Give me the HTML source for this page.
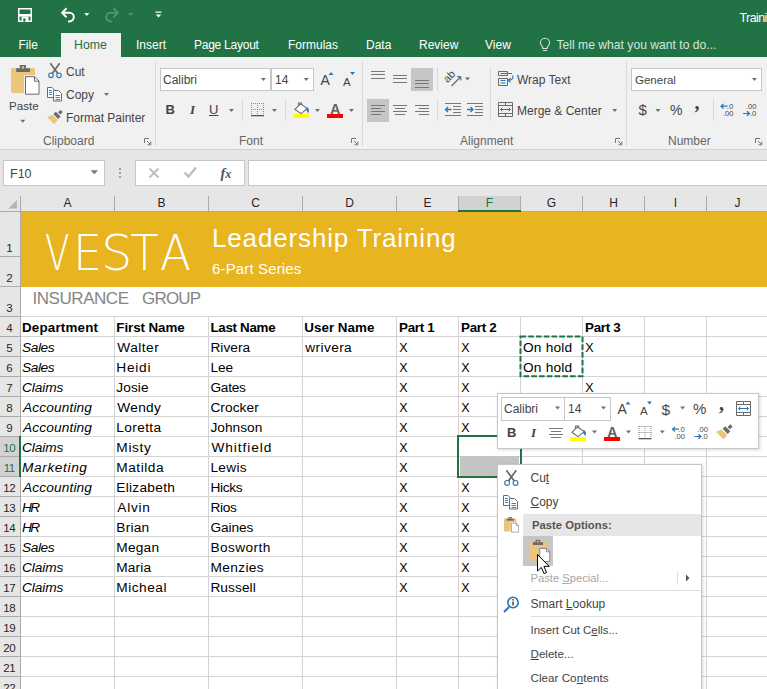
<!DOCTYPE html>
<html lang="en"><head><meta charset="utf-8"><title>Excel</title><style>
*{box-sizing:border-box;margin:0;padding:0}
html,body{width:767px;height:689px;overflow:hidden;background:#fff}
body{position:relative;font-family:"Liberation Sans",sans-serif;font-size:12px;color:#444444}
.a{position:absolute;white-space:pre}
.t{position:absolute;white-space:pre;line-height:16px;height:16px}
.ui{font-size:12px;color:#444444}
.tab{font-size:12px;color:#fff;top:37px}
.c{position:absolute;white-space:pre;font-size:13.7px;color:#000;line-height:20px;height:20px}
.cb{font-weight:bold;font-size:13.4px}
.ci{font-style:italic}
.rh{position:absolute;left:-1px;width:20.4px;text-align:center;letter-spacing:-0.4px;font-size:11.5px;color:#262626;line-height:14px}
.ch{position:absolute;top:196px;text-align:center;font-size:12px;color:#262626;line-height:15px;height:15px}
.box{position:absolute;background:#fff;border:1px solid #c6c6c6}
.sep{position:absolute;width:1px;background:#d9d9d9}
.sel{position:absolute;background:#c6c6c6}
.m{position:absolute;white-space:pre;font-size:12px;color:#444444;line-height:16px}
u{text-decoration:underline;text-underline-offset:1px}
</style></head><body>
<div class="a" style="left:0;top:0;width:767px;height:57px;background:#217346"></div>
<div class="a" style="left:61px;top:33px;width:60px;height:24px;background:#f1f1f1"></div>
<div class="t" style="left:739.5px;top:9.8px;color:#fff;font-size:12.4px;letter-spacing:-0.55px">Training</div>
<div class="t tab" style="left:18.5px">File</div>
<div class="t tab" style="left:136px">Insert</div>
<div class="t tab" style="left:194px;letter-spacing:-0.25px">Page Layout</div>
<div class="t tab" style="left:288px">Formulas</div>
<div class="t tab" style="left:366px">Data</div>
<div class="t tab" style="left:419px">Review</div>
<div class="t tab" style="left:485px">View</div>
<div class="t tab" style="left:74px;color:#217346;font-size:12.3px">Home</div>
<div class="t tab" style="left:556.5px;color:#d5e6dc;font-size:12.15px">Tell me what you want to do...</div>
<div class="a" style="left:0;top:57px;width:767px;height:92px;background:#f1f1f1"></div>
<div class="a" style="left:0;top:149px;width:767px;height:62px;background:#e6e6e6"></div>
<div class="a" style="left:0;top:149px;width:767px;height:1px;background:#d2d2d2"></div>
<div class="sep" style="left:155px;top:62px;height:84px"></div>
<div class="sep" style="left:362px;top:62px;height:84px"></div>
<div class="sep" style="left:626px;top:62px;height:84px"></div>
<div class="sep" style="left:242px;top:99px;height:22px"></div>
<div class="sep" style="left:285px;top:99px;height:22px"></div>
<div class="sep" style="left:437px;top:68px;height:23px"></div>
<div class="sep" style="left:437px;top:99px;height:22px"></div>
<div class="sep" style="left:490px;top:68px;height:53px"></div>
<div class="sep" style="left:713px;top:99px;height:22px"></div>
<div class="sel" style="left:411px;top:68px;width:22px;height:23px"></div>
<div class="sel" style="left:367px;top:99px;width:22px;height:23px"></div>
<div class="box" style="left:160px;top:68px;width:111px;height:23px"></div>
<div class="box" style="left:271px;top:68px;width:43px;height:23px"></div>
<div class="box" style="left:631px;top:68px;width:131px;height:23px"></div>
<div class="t ui" style="left:9px;top:98px;font-size:11.6px">Paste</div>
<div class="t ui" style="left:66px;top:64px;">Cut</div>
<div class="t ui" style="left:66px;top:87px;">Copy</div>
<div class="t ui" style="left:66px;top:110px;">Format Painter</div>
<div class="t ui" style="left:43px;top:133px;color:#666">Clipboard</div>
<div class="t ui" style="left:163px;top:72px;">Calibri</div>
<div class="t ui" style="left:275px;top:72px;">14</div>
<div class="t ui" style="left:239px;top:133px;color:#666">Font</div>
<div class="t ui" style="left:517px;top:72px;">Wrap Text</div>
<div class="t ui" style="left:517px;top:103px;">Merge &amp; Center</div>
<div class="t ui" style="left:460px;top:133px;color:#666">Alignment</div>
<div class="t ui" style="left:635px;top:72px;font-size:11.5px">General</div>
<div class="t ui" style="left:668px;top:133px;color:#666">Number</div>
<div class="t ui" style="left:165.5px;top:102px;font-weight:bold;font-size:13px">B</div>
<div class="t ui" style="left:190px;top:102px;font-style:italic;font-weight:bold;font-size:13px;font-family:'Liberation Serif',serif">I</div>
<div class="t ui" style="left:209px;top:102px;font-size:13px;text-decoration:underline">U</div>
<div class="t ui" style="left:638.5px;top:101.5px;font-size:15px">$</div>
<div class="t ui" style="left:670px;top:102px;font-size:14px">%</div>
<div class="t ui" style="left:694.5px;top:93.5px;font-size:20px;font-weight:bold;font-family:'Liberation Serif',serif">,</div>
<div class="t ui" style="left:320.5px;top:72px;font-size:14px">A</div>
<div class="t ui" style="left:343px;top:73.5px;font-size:11.5px">A</div>
<div class="t ui" style="left:330.3px;top:101.2px;font-size:14px;font-weight:bold;color:#606060">A</div>
<div class="box" style="left:3px;top:160px;width:102px;height:26px;border-color:#c6c6c6"></div>
<div class="box" style="left:135px;top:160px;width:110px;height:26px;border-color:#c6c6c6"></div>
<div class="box" style="left:248px;top:160px;width:530px;height:26px;border-color:#c6c6c6"></div>
<div class="t ui" style="left:10px;top:165.5px;font-size:12.5px">F10</div>
<div class="t" style="left:220.5px;top:164.5px;font-family:'Liberation Serif',serif;font-style:italic;font-weight:bold;font-size:14px;color:#555"><span style="font-size:14.5px">f</span><span style="font-size:12px;letter-spacing:0">x</span></div>
<div class="a" style="left:21px;top:211px;width:746px;height:478px;background:#fff"></div>
<div class="a" style="left:0;top:211px;width:21px;height:478px;background:#e6e6e6"></div>
<div class="a" style="left:459px;top:196px;width:62px;height:15px;background:#d2d2d2"></div>
<div class="a" style="left:0;top:211px;width:458px;height:1px;background:#ababab"></div>
<div class="a" style="left:521px;top:211px;width:246px;height:1px;background:#ababab"></div>
<div class="a" style="left:114px;top:196px;width:1px;height:16px;background:#ababab"></div>
<div class="ch" style="left:21px;width:93px;color:#262626">A</div>
<div class="a" style="left:208px;top:196px;width:1px;height:16px;background:#ababab"></div>
<div class="ch" style="left:115px;width:93px;color:#262626">B</div>
<div class="a" style="left:302px;top:196px;width:1px;height:16px;background:#ababab"></div>
<div class="ch" style="left:209px;width:93px;color:#262626">C</div>
<div class="a" style="left:396px;top:196px;width:1px;height:16px;background:#ababab"></div>
<div class="ch" style="left:303px;width:93px;color:#262626">D</div>
<div class="a" style="left:458px;top:196px;width:1px;height:16px;background:#ababab"></div>
<div class="ch" style="left:397px;width:61px;color:#262626">E</div>
<div class="a" style="left:520px;top:196px;width:1px;height:16px;background:#ababab"></div>
<div class="ch" style="left:459px;width:61px;color:#217346">F</div>
<div class="a" style="left:582px;top:196px;width:1px;height:16px;background:#ababab"></div>
<div class="ch" style="left:521px;width:61px;color:#262626">G</div>
<div class="a" style="left:644px;top:196px;width:1px;height:16px;background:#ababab"></div>
<div class="ch" style="left:583px;width:61px;color:#262626">H</div>
<div class="a" style="left:706px;top:196px;width:1px;height:16px;background:#ababab"></div>
<div class="ch" style="left:645px;width:61px;color:#262626">I</div>
<div class="a" style="left:768px;top:196px;width:1px;height:16px;background:#ababab"></div>
<div class="ch" style="left:707px;width:61px;color:#262626">J</div>
<div class="a" style="left:20px;top:196px;width:1px;height:16px;background:#ababab"></div>
<div class="a" style="left:458px;top:210px;width:63px;height:2px;background:#217346"></div>
<div class="a" style="left:21px;top:316px;width:746px;height:1px;background:#d4d4d4"></div>
<div class="a" style="left:21px;top:336px;width:746px;height:1px;background:#d4d4d4"></div>
<div class="a" style="left:21px;top:356px;width:746px;height:1px;background:#d4d4d4"></div>
<div class="a" style="left:21px;top:376px;width:746px;height:1px;background:#d4d4d4"></div>
<div class="a" style="left:21px;top:396px;width:746px;height:1px;background:#d4d4d4"></div>
<div class="a" style="left:21px;top:416px;width:746px;height:1px;background:#d4d4d4"></div>
<div class="a" style="left:21px;top:436px;width:746px;height:1px;background:#d4d4d4"></div>
<div class="a" style="left:21px;top:456px;width:746px;height:1px;background:#d4d4d4"></div>
<div class="a" style="left:21px;top:476px;width:746px;height:1px;background:#d4d4d4"></div>
<div class="a" style="left:21px;top:496px;width:746px;height:1px;background:#d4d4d4"></div>
<div class="a" style="left:21px;top:516px;width:746px;height:1px;background:#d4d4d4"></div>
<div class="a" style="left:21px;top:536px;width:746px;height:1px;background:#d4d4d4"></div>
<div class="a" style="left:21px;top:556px;width:746px;height:1px;background:#d4d4d4"></div>
<div class="a" style="left:21px;top:576px;width:746px;height:1px;background:#d4d4d4"></div>
<div class="a" style="left:21px;top:596px;width:746px;height:1px;background:#d4d4d4"></div>
<div class="a" style="left:21px;top:616px;width:746px;height:1px;background:#d4d4d4"></div>
<div class="a" style="left:21px;top:636px;width:746px;height:1px;background:#d4d4d4"></div>
<div class="a" style="left:21px;top:656px;width:746px;height:1px;background:#d4d4d4"></div>
<div class="a" style="left:21px;top:676px;width:746px;height:1px;background:#d4d4d4"></div>
<div class="a" style="left:21px;top:696px;width:746px;height:1px;background:#d4d4d4"></div>
<div class="a" style="left:114px;top:316px;width:1px;height:373px;background:#d4d4d4"></div>
<div class="a" style="left:208px;top:316px;width:1px;height:373px;background:#d4d4d4"></div>
<div class="a" style="left:302px;top:316px;width:1px;height:373px;background:#d4d4d4"></div>
<div class="a" style="left:396px;top:316px;width:1px;height:373px;background:#d4d4d4"></div>
<div class="a" style="left:458px;top:316px;width:1px;height:373px;background:#d4d4d4"></div>
<div class="a" style="left:520px;top:316px;width:1px;height:373px;background:#d4d4d4"></div>
<div class="a" style="left:582px;top:316px;width:1px;height:373px;background:#d4d4d4"></div>
<div class="a" style="left:644px;top:316px;width:1px;height:373px;background:#d4d4d4"></div>
<div class="a" style="left:706px;top:316px;width:1px;height:373px;background:#d4d4d4"></div>
<div class="a" style="left:768px;top:316px;width:1px;height:373px;background:#d4d4d4"></div>
<div class="a" style="left:21px;top:212px;width:746px;height:75px;background:#e8b420"></div>
<div class="a" style="left:0;top:437px;width:20px;height:40px;background:#d2d2d2"></div>
<div class="a" style="left:20px;top:211px;width:1px;height:478px;background:#ababab"></div>
<div class="a" style="left:0;top:256px;width:20px;height:1px;background:#ababab"></div>
<div class="rh" style="top:241px;color:#262626">1</div>
<div class="a" style="left:0;top:286px;width:20px;height:1px;background:#ababab"></div>
<div class="rh" style="top:271px;color:#262626">2</div>
<div class="a" style="left:0;top:316px;width:20px;height:1px;background:#ababab"></div>
<div class="rh" style="top:301px;color:#262626">3</div>
<div class="a" style="left:0;top:336px;width:20px;height:1px;background:#ababab"></div>
<div class="rh" style="top:321px;color:#262626">4</div>
<div class="a" style="left:0;top:356px;width:20px;height:1px;background:#ababab"></div>
<div class="rh" style="top:341px;color:#262626">5</div>
<div class="a" style="left:0;top:376px;width:20px;height:1px;background:#ababab"></div>
<div class="rh" style="top:361px;color:#262626">6</div>
<div class="a" style="left:0;top:396px;width:20px;height:1px;background:#ababab"></div>
<div class="rh" style="top:381px;color:#262626">7</div>
<div class="a" style="left:0;top:416px;width:20px;height:1px;background:#ababab"></div>
<div class="rh" style="top:401px;color:#262626">8</div>
<div class="a" style="left:0;top:436px;width:20px;height:1px;background:#ababab"></div>
<div class="rh" style="top:421px;color:#262626">9</div>
<div class="a" style="left:0;top:456px;width:20px;height:1px;background:#ababab"></div>
<div class="rh" style="top:441px;color:#217346">10</div>
<div class="a" style="left:0;top:476px;width:20px;height:1px;background:#ababab"></div>
<div class="rh" style="top:461px;color:#217346">11</div>
<div class="a" style="left:0;top:496px;width:20px;height:1px;background:#ababab"></div>
<div class="rh" style="top:481px;color:#262626">12</div>
<div class="a" style="left:0;top:516px;width:20px;height:1px;background:#ababab"></div>
<div class="rh" style="top:501px;color:#262626">13</div>
<div class="a" style="left:0;top:536px;width:20px;height:1px;background:#ababab"></div>
<div class="rh" style="top:521px;color:#262626">14</div>
<div class="a" style="left:0;top:556px;width:20px;height:1px;background:#ababab"></div>
<div class="rh" style="top:541px;color:#262626">15</div>
<div class="a" style="left:0;top:576px;width:20px;height:1px;background:#ababab"></div>
<div class="rh" style="top:561px;color:#262626">16</div>
<div class="a" style="left:0;top:596px;width:20px;height:1px;background:#ababab"></div>
<div class="rh" style="top:581px;color:#262626">17</div>
<div class="a" style="left:0;top:616px;width:20px;height:1px;background:#ababab"></div>
<div class="rh" style="top:601px;color:#262626">18</div>
<div class="a" style="left:0;top:636px;width:20px;height:1px;background:#ababab"></div>
<div class="rh" style="top:621px;color:#262626">19</div>
<div class="a" style="left:0;top:656px;width:20px;height:1px;background:#ababab"></div>
<div class="rh" style="top:641px;color:#262626">20</div>
<div class="a" style="left:0;top:676px;width:20px;height:1px;background:#ababab"></div>
<div class="rh" style="top:661px;color:#262626">21</div>
<div class="a" style="left:0;top:696px;width:20px;height:1px;background:#ababab"></div>
<div class="rh" style="top:681px;color:#262626">22</div>
<div class="a" style="left:19px;top:436px;width:2px;height:41px;background:#217346"></div>
<div class="a" id="vesta" style="left:0;top:223.5px;width:210px;height:58px;font-family:'DejaVu Sans Light','DejaVu Sans',sans-serif;font-weight:200;font-size:50.5px;line-height:58px;color:#fff"><span style="position:absolute;top:0;left:44.59px;transform-origin:0 0;transform:scaleX(0.709)">V</span><span style="position:absolute;top:0;left:72.55px;transform-origin:0 0;transform:scaleX(0.909)">E</span><span style="position:absolute;top:0;left:100.78px;transform-origin:0 0;transform:scaleX(0.979)">S</span><span style="position:absolute;top:0;left:129.87px;transform-origin:0 0;transform:scaleX(0.928)">T</span><span style="position:absolute;top:0;left:159.90px;transform-origin:0 0;transform:scaleX(0.897)">A</span></div>
<div class="a" style="left:32.5px;top:289.5px;font-size:17px;line-height:18px;color:#858585;letter-spacing:-0.45px" id="ins">INSURANCE</div>
<div class="a" style="left:142px;top:289.5px;font-size:17px;line-height:18px;color:#858585;letter-spacing:-0.8px" id="grp">GROUP</div>
<div class="a" style="left:212px;top:223px;font-size:26px;line-height:30px;color:#fff;letter-spacing:0.85px" id="lead">Leadership Training</div>
<div class="a" style="left:212px;top:260px;font-size:15px;line-height:18px;color:#fff;letter-spacing:0.15px" id="six">6-Part Series</div>
<div class="c cb" style="left:22px;top:318px;letter-spacing:0.17px">Department</div>
<div class="c cb" style="left:116.3px;top:318px;letter-spacing:-0.09px">First Name</div>
<div class="c cb" style="left:210.4px;top:318px;letter-spacing:-0.31px">Last Name</div>
<div class="c cb" style="left:304.3px;top:318px;letter-spacing:0.01px">User Name</div>
<div class="c cb" style="left:399px;top:318px;letter-spacing:-0.3px">Part 1</div>
<div class="c cb" style="left:461px;top:318px;letter-spacing:-0.3px">Part 2</div>
<div class="c cb" style="left:585px;top:318px;letter-spacing:-0.3px">Part 3</div>
<div class="c ci" style="left:22px;top:338px;letter-spacing:-0.40px">Sales</div>
<div class="c " style="left:117.3px;top:338px;letter-spacing:0.48px">Walter</div>
<div class="c " style="left:210.4px;top:338px;letter-spacing:0.04px">Rivera</div>
<div class="c " style="left:305.3px;top:338px;letter-spacing:0.38px">wrivera</div>
<div class="c " style="left:399.3px;top:338px;font-size:12.5px">X</div>
<div class="c " style="left:461.3px;top:338px;font-size:12.5px">X</div>
<div class="c " style="left:523px;top:338px;letter-spacing:0.2px">On hold</div>
<div class="c " style="left:585.3px;top:338px;font-size:12.5px">X</div>
<div class="c ci" style="left:22px;top:358px;letter-spacing:-0.40px">Sales</div>
<div class="c " style="left:116.3px;top:358px;letter-spacing:0.75px">Heidi</div>
<div class="c " style="left:210.4px;top:358px;letter-spacing:-0.10px">Lee</div>
<div class="c " style="left:399.3px;top:358px;font-size:12.5px">X</div>
<div class="c " style="left:461.3px;top:358px;font-size:12.5px">X</div>
<div class="c " style="left:523px;top:358px;letter-spacing:0.2px">On hold</div>
<div class="c ci" style="left:22px;top:378px;letter-spacing:-0.08px">Claims</div>
<div class="c " style="left:116.3px;top:378px;letter-spacing:0.07px">Josie</div>
<div class="c " style="left:210.4px;top:378px;letter-spacing:-0.25px">Gates</div>
<div class="c " style="left:399.3px;top:378px;font-size:12.5px">X</div>
<div class="c " style="left:461.3px;top:378px;font-size:12.5px">X</div>
<div class="c " style="left:585.3px;top:378px;font-size:12.5px">X</div>
<div class="c ci" style="left:23px;top:398px;letter-spacing:0.14px">Accounting</div>
<div class="c " style="left:117.3px;top:398px;letter-spacing:0.30px">Wendy</div>
<div class="c " style="left:210.4px;top:398px;letter-spacing:0.07px">Crocker</div>
<div class="c " style="left:399.3px;top:398px;font-size:12.5px">X</div>
<div class="c " style="left:461.3px;top:398px;font-size:12.5px">X</div>
<div class="c ci" style="left:23px;top:418px;letter-spacing:0.14px">Accounting</div>
<div class="c " style="left:116.3px;top:418px;letter-spacing:0.37px">Loretta</div>
<div class="c " style="left:210.4px;top:418px;letter-spacing:0.02px">Johnson</div>
<div class="c " style="left:399.3px;top:418px;font-size:12.5px">X</div>
<div class="c " style="left:461.3px;top:418px;font-size:12.5px">X</div>
<div class="c ci" style="left:22px;top:438px;letter-spacing:-0.08px">Claims</div>
<div class="c " style="left:116.3px;top:438px;letter-spacing:0.68px">Misty</div>
<div class="c " style="left:211.4px;top:438px;letter-spacing:0.94px">Whitfield</div>
<div class="c " style="left:399.3px;top:438px;font-size:12.5px">X</div>
<div class="c ci" style="left:22px;top:458px;letter-spacing:0.61px">Marketing</div>
<div class="c " style="left:116.3px;top:458px;letter-spacing:0.52px">Matilda</div>
<div class="c " style="left:210.4px;top:458px;letter-spacing:0.30px">Lewis</div>
<div class="c " style="left:399.3px;top:458px;font-size:12.5px">X</div>
<div class="c ci" style="left:23px;top:478px;letter-spacing:0.14px">Accounting</div>
<div class="c " style="left:116.3px;top:478px;letter-spacing:0.28px">Elizabeth</div>
<div class="c " style="left:210.4px;top:478px;letter-spacing:-0.30px">Hicks</div>
<div class="c " style="left:399.3px;top:478px;font-size:12.5px">X</div>
<div class="c " style="left:461.3px;top:478px;font-size:12.5px">X</div>
<div class="c ci" style="left:22px;top:498px;letter-spacing:-1.70px">HR</div>
<div class="c " style="left:117.3px;top:498px;letter-spacing:0.72px">Alvin</div>
<div class="c " style="left:210.4px;top:498px;letter-spacing:-0.27px">Rios</div>
<div class="c " style="left:399.3px;top:498px;font-size:12.5px">X</div>
<div class="c " style="left:461.3px;top:498px;font-size:12.5px">X</div>
<div class="c ci" style="left:22px;top:518px;letter-spacing:-1.70px">HR</div>
<div class="c " style="left:116.3px;top:518px;letter-spacing:0.22px">Brian</div>
<div class="c " style="left:210.4px;top:518px;letter-spacing:-0.08px">Gaines</div>
<div class="c " style="left:399.3px;top:518px;font-size:12.5px">X</div>
<div class="c " style="left:461.3px;top:518px;font-size:12.5px">X</div>
<div class="c ci" style="left:22px;top:538px;letter-spacing:-0.40px">Sales</div>
<div class="c " style="left:116.3px;top:538px;letter-spacing:0.22px">Megan</div>
<div class="c " style="left:210.4px;top:538px;letter-spacing:0.41px">Bosworth</div>
<div class="c " style="left:399.3px;top:538px;font-size:12.5px">X</div>
<div class="c " style="left:461.3px;top:538px;font-size:12.5px">X</div>
<div class="c ci" style="left:22px;top:558px;letter-spacing:-0.08px">Claims</div>
<div class="c " style="left:116.3px;top:558px;letter-spacing:0.13px">Maria</div>
<div class="c " style="left:210.4px;top:558px;letter-spacing:0.38px">Menzies</div>
<div class="c " style="left:399.3px;top:558px;font-size:12.5px">X</div>
<div class="c " style="left:461.3px;top:558px;font-size:12.5px">X</div>
<div class="c ci" style="left:22px;top:578px;letter-spacing:-0.08px">Claims</div>
<div class="c " style="left:116.3px;top:578px;letter-spacing:0.50px">Micheal</div>
<div class="c " style="left:210.4px;top:578px;letter-spacing:0.08px">Russell</div>
<div class="c " style="left:399.3px;top:578px;font-size:12.5px">X</div>
<div class="c " style="left:461.3px;top:578px;font-size:12.5px">X</div>
<div class="a" style="left:460px;top:456px;width:59px;height:20px;background:#c4c4c4"></div>
<div class="a" style="left:457px;top:435px;width:65px;height:43px;border:2px solid #217346"></div>
<svg class="a" style="left:518px;top:334px" width="68" height="46"><rect x="2.5" y="2.5" width="62" height="39.7" fill="none" stroke="#217346" stroke-width="2" stroke-dasharray="5.7 2.05"/></svg>
<div class="a" style="left:497px;top:393px;width:262px;height:56px;background:#fff;border:1px solid #c6c6c6;box-shadow:1px 1px 3px rgba(0,0,0,.16)"></div>
<div class="box" style="left:501px;top:397px;width:64px;height:24px;border-color:#c6c6c6"></div>
<div class="box" style="left:564px;top:397px;width:47px;height:24px;border-color:#c6c6c6"></div>
<div class="t ui" style="left:504px;top:401px;">Calibri</div>
<div class="t ui" style="left:568px;top:401px;">14</div>
<div class="t ui" style="left:617.5px;top:401px;font-size:14px">A</div>
<div class="t ui" style="left:640px;top:402.5px;font-size:11.5px">A</div>
<div class="t ui" style="left:661.5px;top:401.5px;font-size:15.5px">$</div>
<div class="t ui" style="left:693px;top:401px;font-size:15px">%</div>
<div class="t ui" style="left:719px;top:394.5px;font-size:20px;font-weight:bold;font-family:'Liberation Serif',serif">,</div>
<div class="t ui" style="left:507px;top:425px;font-weight:bold;font-size:13px">B</div>
<div class="t ui" style="left:531px;top:425px;font-style:italic;font-weight:bold;font-size:13px;font-family:'Liberation Serif',serif">I</div>
<div class="t ui" style="left:607.3px;top:424.2px;font-size:14px;font-weight:bold;color:#606060">A</div>
<div class="a" style="left:497px;top:464px;width:205px;height:240px;background:#fff;border:1px solid #c6c6c6;box-shadow:1px 1px 3px rgba(0,0,0,.16)"></div>
<div class="a" style="left:523px;top:514px;width:178px;height:22px;background:#e6e6e6"></div>
<div class="a" style="left:523px;top:536px;width:30px;height:30px;background:#c6c6c6"></div>
<div class="m" style="left:530.5px;top:470px;">Cu<u>t</u></div>
<div class="m" style="left:530.5px;top:494px;"><u>C</u>opy</div>
<div class="m" style="left:532px;top:517px;font-weight:bold;font-size:11.3px;color:#555">Paste Options:</div>
<div class="m" style="left:530.5px;top:570px;color:#a6a6a6;font-size:11.2px">Paste <u>S</u>pecial...</div>
<div class="m" style="left:530.5px;top:596px;">Smart <u>L</u>ookup</div>
<div class="m" style="left:530.5px;top:622px;font-size:11.4px">Insert Cut C<u>e</u>lls...</div>
<div class="m" style="left:530.5px;top:646px;font-size:11.6px"><u>D</u>elete...</div>
<div class="m" style="left:530.5px;top:670px;font-size:11.7px">Clear Co<u>n</u>tents</div>
<div class="a" style="left:531px;top:590px;width:170px;height:1px;background:#e0e0e0"></div>
<div class="a" style="left:531px;top:616px;width:170px;height:1px;background:#e0e0e0"></div>
<div class="a" style="left:677px;top:571px;width:1px;height:14px;background:#e0e0e0"></div>
<svg class="a" style="left:0;top:0;pointer-events:none" width="767" height="689" viewBox="0 0 767 689">
<rect x="18.75" y="8.75" width="12.5" height="12.5" fill="none" stroke="#fff" stroke-width="1.5"/>
<rect x="18" y="14" width="14" height="2.6" fill="#fff"/>
<rect x="21.6" y="16.5" width="7" height="5" fill="#fff"/><rect x="23.3" y="18.4" width="2.2" height="3.2" fill="#217346"/>
<g transform="translate(61,0)" fill="none" stroke="#fff" stroke-width="2" stroke-linejoin="miter"><path d="M5.5 8.3L1.2 12.8L5.5 17.3"/><path d="M1.5 12.8H8.5a4.3 4.3 0 0 1 0 8.6H7"/></g>
<g transform="translate(119,0) scale(-1,1)" fill="none" stroke="#4f9470" stroke-width="2" stroke-linejoin="miter"><path d="M5.5 8.3L1.2 12.8L5.5 17.3"/><path d="M1.5 12.8H8.5a4.3 4.3 0 0 1 0 8.6H7"/></g>
<path d="M84.3 13.0h5l-2.5 3z" fill="#fff"/>
<path d="M128.3 13.0h5l-2.5 3z" fill="#4f9470"/>
<rect x="155.5" y="11.5" width="6" height="1.2" fill="#fff"/>
<path d="M155.75 14.5h5.5l-2.75 3z" fill="#fff"/>
<g fill="none" stroke="#d5e6dc" stroke-width="1.1"><path d="M542.8 48.5v-1.5c-1.6-1.2-2.4-2.6-2.4-4.2a4.6 4.6 0 0 1 9.2 0c0 1.600-.8 3-2.4 4.2v1.500z"/><path d="M543 50.500h4"/></g>
<g transform="translate(11,65) scale(1.0)"><rect x="0" y="3" width="24" height="25" rx="1.6" fill="#ecc57c"/><rect x="5.200" y="3.200" width="13.800" height="3.800" fill="#6a6a6a"/><path d="M8.800 0h6.200v3.500h-6.200z" fill="#6a6a6a"/><rect x="10.900" y="1.300" width="2.200" height="2.200" fill="#ecc57c"/><rect x="13" y="10.200" width="16" height="20" fill="#f1f1f1"/><path d="M14.500 11.700h9l4.500 4.500v13h-13.500z" fill="#fff" stroke="#6a6a6a" stroke-width="1"/><path d="M23.500 11.700v4.500h4.500" fill="none" stroke="#6a6a6a" stroke-width="1"/></g>
<path d="M20.3 119.8h5l-2.5 3z" fill="#6f6f6f"/>
<g transform="translate(48,63) scale(1.0)" fill="none"><path d="M2.300 0.300L9.800 10.500M11.700 0.300L4.200 10.500" stroke="#6a6a6a" stroke-width="1.700"/><circle cx="3" cy="12.300" r="2.300" stroke="#2e75b6" stroke-width="1.100"/><circle cx="11" cy="12.300" r="2.300" stroke="#2e75b6" stroke-width="1.100"/></g>
<g transform="translate(47,87) scale(1.0)"><path d="M0.500 0.500h4.500l2.500 2.500v7.500h-7z" fill="#fff" stroke="#6a6a6a"/><path d="M6.500 3.500h5l3 3v7.500h-8z" fill="#fff" stroke="#6a6a6a"/><path d="M2 3.500h3M2 5.500h3M2 7.500h3M8.500 8.500h4.500M8.500 10.500h4.500M8.500 12.500h4.500" stroke="#2e75b6" stroke-width="0.900"/></g>
<path d="M104.0 92.9h5l-2.5 3z" fill="#6f6f6f"/>
<g transform="translate(47,110.5) scale(1.0)"><path d="M0 6.500L5.200 4.300L10.800 9.600L7.200 13.700z" fill="#ecc57c"/><path d="M6.300 3.600L8.900 1.300L13.600 6L11.200 8.600z" fill="#6a6a6a"/><path d="M11 1.800L13.600 -0.600L15.800 1.400L13.300 4z" fill="#6a6a6a"/></g>
<path d="M260.9 78.0h5l-2.5 3z" fill="#6f6f6f"/>
<path d="M303.8 78.0h5l-2.5 3z" fill="#6f6f6f"/>
<path d="M228.9 108.9h5l-2.5 3z" fill="#6f6f6f"/>
<path d="M271.9 108.9h5l-2.5 3z" fill="#6f6f6f"/>
<path d="M314.9 108.9h5l-2.5 3z" fill="#6f6f6f"/>
<path d="M348.9 108.9h5l-2.5 3z" fill="#6f6f6f"/>
<path d="M465.0 77.5h5l-2.5 3z" fill="#6f6f6f"/>
<path d="M612.2 109.1h5l-2.5 3z" fill="#6f6f6f"/>
<path d="M751.9 78.0h5l-2.5 3z" fill="#6f6f6f"/>
<path d="M655.5 109.1h5l-2.5 3z" fill="#6f6f6f"/>
<path d="M555.1 406.5h5l-2.5 3z" fill="#6f6f6f"/>
<path d="M601.0 406.5h5l-2.5 3z" fill="#6f6f6f"/>
<path d="M592.0 430.5h5l-2.5 3z" fill="#6f6f6f"/>
<path d="M626.0 430.5h5l-2.5 3z" fill="#6f6f6f"/>
<path d="M659.8 430.5h5l-2.5 3z" fill="#6f6f6f"/>
<path d="M680.1 406.5h5l-2.5 3z" fill="#6f6f6f"/>
<path d="M90.55 170.2h7.5l-3.75 4z" fill="#777"/>
<path d="M686 574.500l3.500 3.500l-3.500 3.500z" fill="#555"/>
<g transform="translate(144,138)" fill="none" stroke="#777" stroke-width="1"><path d="M0.500 5V0.500H5"/><path d="M3 3L6.500 6.500M6.800 3.500V6.800H3.500"/></g>
<g transform="translate(351,138)" fill="none" stroke="#777" stroke-width="1"><path d="M0.500 5V0.500H5"/><path d="M3 3L6.500 6.500M6.800 3.500V6.800H3.500"/></g>
<g transform="translate(615,138)" fill="none" stroke="#777" stroke-width="1"><path d="M0.500 5V0.500H5"/><path d="M3 3L6.500 6.500M6.800 3.500V6.800H3.500"/></g>
<g transform="translate(755,138)" fill="none" stroke="#777" stroke-width="1"><path d="M0.500 5V0.500H5"/><path d="M3 3L6.500 6.500M6.800 3.500V6.800H3.500"/></g>
<path d="M328.5 75l2.500 -3l2.500 3z" fill="#2e75b6"/>
<path d="M350 72h5l-2.500 3z" fill="#2e75b6"/>
<path d="M625.5 404.5l2.500 -3l2.500 3z" fill="#2e75b6"/>
<path d="M647 401.5h5l-2.500 3z" fill="#2e75b6"/>
<g transform="translate(251,103)" stroke="#8a8a8a" stroke-width="1" stroke-dasharray="1 1" fill="none"><path d="M0.500 0v12M6.500 0v12M12.500 0v12M0 0.500h13M0 6.500h13"/></g>
<rect x="251" y="115" width="13" height="1.300" fill="#555"/>
<g transform="translate(638.5,426)" stroke="#8a8a8a" stroke-width="1" stroke-dasharray="1 1" fill="none"><path d="M0.500 0v12M6.500 0v12M12.500 0v12M0 0.500h13M0 6.500h13"/></g>
<rect x="638.5" y="438" width="13" height="1.300" fill="#555"/>
<g transform="translate(293,102)"><rect x="0" y="12" width="16" height="4" fill="#ffff00"/><path d="M1.900 7.300L7.400 1.800L14.200 6.600L8 11.600z" fill="#fff" stroke="#6a6a6a" stroke-width="1.100" stroke-linejoin="round"/><path d="M5.400 4V0.900h3.300V2.800" fill="none" stroke="#6a6a6a" stroke-width="1"/><path d="M13.300 4.600c2.600 1.400 3.400 4 2 6.600c-.600 -1.500 -1.300 -2.500 -2.200 -3.300l1.200 -1.200z" fill="#2e75b6"/></g>
<g transform="translate(570,425)"><rect x="0" y="12" width="16" height="4" fill="#ffff00"/><path d="M1.900 7.300L7.400 1.800L14.200 6.600L8 11.600z" fill="#fff" stroke="#6a6a6a" stroke-width="1.100" stroke-linejoin="round"/><path d="M5.400 4V0.900h3.300V2.800" fill="none" stroke="#6a6a6a" stroke-width="1"/><path d="M13.300 4.600c2.600 1.400 3.400 4 2 6.600c-.600 -1.500 -1.300 -2.500 -2.200 -3.300l1.200 -1.200z" fill="#2e75b6"/></g>
<rect x="327" y="114" width="16" height="4" fill="#ff0000"/>
<rect x="604" y="437" width="16" height="4" fill="#ff0000"/>
<rect x="371" y="71.0" width="14" height="1" fill="#777"/>
<rect x="371" y="74.0" width="14" height="1" fill="#777"/>
<rect x="371" y="78.0" width="14" height="1" fill="#777"/>
<rect x="393" y="75.0" width="14" height="1" fill="#777"/>
<rect x="393" y="78.0" width="14" height="1" fill="#777"/>
<rect x="393" y="82.0" width="14" height="1" fill="#777"/>
<rect x="415" y="80.0" width="14" height="1" fill="#777"/>
<rect x="415" y="83.0" width="14" height="1" fill="#777"/>
<rect x="415" y="87.0" width="14" height="1" fill="#777"/>
<rect x="371" y="105.0" width="14" height="1" fill="#777"/>
<rect x="371" y="108.0" width="10" height="1" fill="#777"/>
<rect x="371" y="111.0" width="14" height="1" fill="#777"/>
<rect x="371" y="114.0" width="10" height="1" fill="#777"/>
<rect x="393.0" y="105.0" width="14" height="1" fill="#777"/>
<rect x="395.0" y="108.0" width="10" height="1" fill="#777"/>
<rect x="393.0" y="111.0" width="14" height="1" fill="#777"/>
<rect x="395.0" y="114.0" width="10" height="1" fill="#777"/>
<rect x="415" y="105.0" width="14" height="1" fill="#777"/>
<rect x="419" y="108.0" width="10" height="1" fill="#777"/>
<rect x="415" y="111.0" width="14" height="1" fill="#777"/>
<rect x="419" y="114.0" width="10" height="1" fill="#777"/>
<rect x="549.0" y="428.0" width="14" height="1" fill="#777"/>
<rect x="551.0" y="431.0" width="10" height="1" fill="#777"/>
<rect x="549.0" y="434.0" width="14" height="1" fill="#777"/>
<rect x="551.0" y="437.0" width="10" height="1" fill="#777"/>
<path d="M451.5 86L460.5 77M460.8 76.700h-3.800M460.800 76.700v3.800" stroke="#6a6a6a" stroke-width="1.200" fill="none"/>
<text transform="translate(447.500,83.300) rotate(-45)" font-family="Liberation Sans, sans-serif" font-size="10.800" fill="#4a4a4a">ab</text>
<rect x="445" y="103.0" width="16" height="1" fill="#777"/>
<rect x="445" y="115.0" width="16" height="1" fill="#777"/>
<rect x="453" y="106.0" width="8" height="1" fill="#777"/>
<rect x="453" y="109.0" width="8" height="1" fill="#777"/>
<rect x="453" y="112.0" width="8" height="1" fill="#777"/>
<path d="M445.5 109.5h6M448 107.0l-2.500 2.500l2.500 2.500" stroke="#2e75b6" stroke-width="1.300" fill="none"/>
<rect x="467" y="103.0" width="16" height="1" fill="#777"/>
<rect x="467" y="115.0" width="16" height="1" fill="#777"/>
<rect x="475" y="106.0" width="8" height="1" fill="#777"/>
<rect x="475" y="109.0" width="8" height="1" fill="#777"/>
<rect x="475" y="112.0" width="8" height="1" fill="#777"/>
<path d="M467 109.5h6M470.5 107.0l2.500 2.500l-2.500 2.500" stroke="#2e75b6" stroke-width="1.300" fill="none"/>
<g fill="none"><path d="M498.500 71.500h9v4h-9zM498.500 78.500h9v7h-9z" stroke="#6a6a6a"/><path d="M500.500 73.500h11.500M500.500 80.500h5M500.500 83h5" stroke="#2e75b6"/><path d="M512.500 75.500c1.200 2.500 -.5 4.800 -4 4.800M510.500 78.200l-2.300 2.100l2.300 2.100" stroke="#2e75b6" stroke-width="1.100"/></g>
<g transform="translate(498,102)" fill="none"><path d="M0.500 0.500h14v14h-14zM0.500 3.500h14M0.500 11.500h14M7.500 0.500v3M7.500 11.500v3" stroke="#6a6a6a"/><path d="M2.500 7.500h10M4.300 5.700L2.500 7.500l1.800 1.800M10.700 5.700l1.800 1.800l-1.800 1.800" stroke="#2e75b6" stroke-width="1"/></g>
<g transform="translate(736,401)" fill="none"><path d="M0.500 0.500h14v14h-14zM0.500 3.500h14M0.500 11.500h14M7.500 0.500v3M7.500 11.500v3" stroke="#6a6a6a"/><path d="M2.500 7.500h10M4.300 5.700L2.500 7.500l1.800 1.800M10.700 5.700l1.800 1.800l-1.800 1.800" stroke="#2e75b6" stroke-width="1"/></g>
<text x="726.8" y="108.8" font-family="Liberation Sans, sans-serif" font-size="7.600" fill="#444">.0</text><text x="722.8" y="116.10000000000001" font-family="Liberation Sans, sans-serif" font-size="7.600" fill="#444">.00</text>
<path d="M721.0 106.2h6.500M723.5 103.9l-2.500 2.300l2.500 2.300" stroke="#2e75b6" stroke-width="1.200" fill="none"/>
<text x="745.8" y="108.8" font-family="Liberation Sans, sans-serif" font-size="7.600" fill="#444">.00</text><text x="750" y="116.10000000000001" font-family="Liberation Sans, sans-serif" font-size="7.600" fill="#444">.0</text>
<path d="M743 113.5h6.500M747 111.2l2.500 2.300l-2.500 2.300" stroke="#2e75b6" stroke-width="1.200" fill="none"/>
<text x="678.3" y="431.8" font-family="Liberation Sans, sans-serif" font-size="7.600" fill="#444">.0</text><text x="674.3" y="439.09999999999997" font-family="Liberation Sans, sans-serif" font-size="7.600" fill="#444">.00</text>
<path d="M672.5 429.2h6.500M675 426.9l-2.500 2.300l2.500 2.300" stroke="#2e75b6" stroke-width="1.200" fill="none"/>
<text x="697.3" y="431.8" font-family="Liberation Sans, sans-serif" font-size="7.600" fill="#444">.00</text><text x="701.5" y="439.09999999999997" font-family="Liberation Sans, sans-serif" font-size="7.600" fill="#444">.0</text>
<path d="M694.5 436.5h6.500M698.5 434.2l2.500 2.300l-2.500 2.300" stroke="#2e75b6" stroke-width="1.200" fill="none"/>
<g fill="#a0a0a0"><rect x="119" y="168" width="2" height="2"/><rect x="119" y="172" width="2" height="2"/><rect x="119" y="176" width="2" height="2"/></g>
<path d="M149.500 168.500l9 9M158.500 168.500l-9 9" stroke="#bebebe" stroke-width="1.800" fill="none"/>
<path d="M184.500 172.500l4 4l7.500 -9" stroke="#bebebe" stroke-width="2.400" fill="none"/>
<path d="M17 200v8.500h-8.500z" fill="#b4b4b4"/>
<g transform="translate(504,470) scale(1.05)" fill="none"><path d="M2.300 0.300L9.800 10.500M11.700 0.300L4.200 10.500" stroke="#6a6a6a" stroke-width="1.700"/><circle cx="3" cy="12.300" r="2.300" stroke="#2e75b6" stroke-width="1.100"/><circle cx="11" cy="12.300" r="2.300" stroke="#2e75b6" stroke-width="1.100"/></g>
<g transform="translate(503,495) scale(1.0)"><path d="M0.500 0.500h4.500l2.500 2.500v7.500h-7z" fill="#fff" stroke="#6a6a6a"/><path d="M6.500 3.500h5l3 3v7.500h-8z" fill="#fff" stroke="#6a6a6a"/><path d="M2 3.500h3M2 5.500h3M2 7.500h3M8.500 8.500h4.500M8.500 10.500h4.500M8.500 12.500h4.500" stroke="#2e75b6" stroke-width="0.900"/></g>
<g transform="translate(504,517) scale(0.52)"><rect x="0" y="3" width="24" height="25" rx="1.6" fill="#ecc57c"/><rect x="5.200" y="3.200" width="13.800" height="3.800" fill="#6a6a6a"/><path d="M8.800 0h6.200v3.500h-6.200z" fill="#6a6a6a"/><rect x="10.900" y="1.300" width="2.200" height="2.200" fill="#ecc57c"/><rect x="13" y="10.200" width="16" height="20" fill="#fff"/><path d="M14.500 11.700h9l4.500 4.500v13h-13.500z" fill="#fff" stroke="#6a6a6a" stroke-width="1"/><path d="M23.500 11.700v4.500h4.500" fill="none" stroke="#6a6a6a" stroke-width="1"/></g>
<g transform="translate(529,539.8) scale(0.74)"><rect x="0" y="3" width="24" height="25" rx="1.6" fill="#ecc57c"/><rect x="5.200" y="3.200" width="13.800" height="3.800" fill="#6a6a6a"/><path d="M8.800 0h6.200v3.500h-6.200z" fill="#6a6a6a"/><rect x="10.900" y="1.300" width="2.200" height="2.200" fill="#ecc57c"/><rect x="13" y="10.200" width="16" height="20" fill="#c6c6c6"/><path d="M14.500 11.700h9l4.500 4.500v13h-13.500z" fill="#fff" stroke="#6a6a6a" stroke-width="1"/><path d="M23.500 11.700v4.500h4.500" fill="none" stroke="#6a6a6a" stroke-width="1"/></g>
<g transform="translate(716,425) scale(1.05)"><path d="M0 6.500L5.200 4.300L10.800 9.600L7.200 13.700z" fill="#ecc57c"/><path d="M6.300 3.600L8.900 1.300L13.600 6L11.200 8.600z" fill="#6a6a6a"/><path d="M11 1.800L13.600 -0.600L15.800 1.400L13.300 4z" fill="#6a6a6a"/></g>
<g fill="none" stroke="#2e75b6"><circle cx="513" cy="602.500" r="5.200" stroke-width="1.600"/><path d="M509 607l-5 5" stroke-width="2.200"/></g>
<rect x="512.300" y="601.500" width="1.500" height="4" fill="#444"/><rect x="512.300" y="599" width="1.500" height="1.500" fill="#444"/>
<path d="M537.500 554.500v16.500l3.800 -3.600l2.700 6.200l2.600 -1.100l-2.700 -6.100h5.300z" fill="#fff" stroke="#000" stroke-width="1" stroke-linejoin="miter"/>
</svg>
</body></html>
